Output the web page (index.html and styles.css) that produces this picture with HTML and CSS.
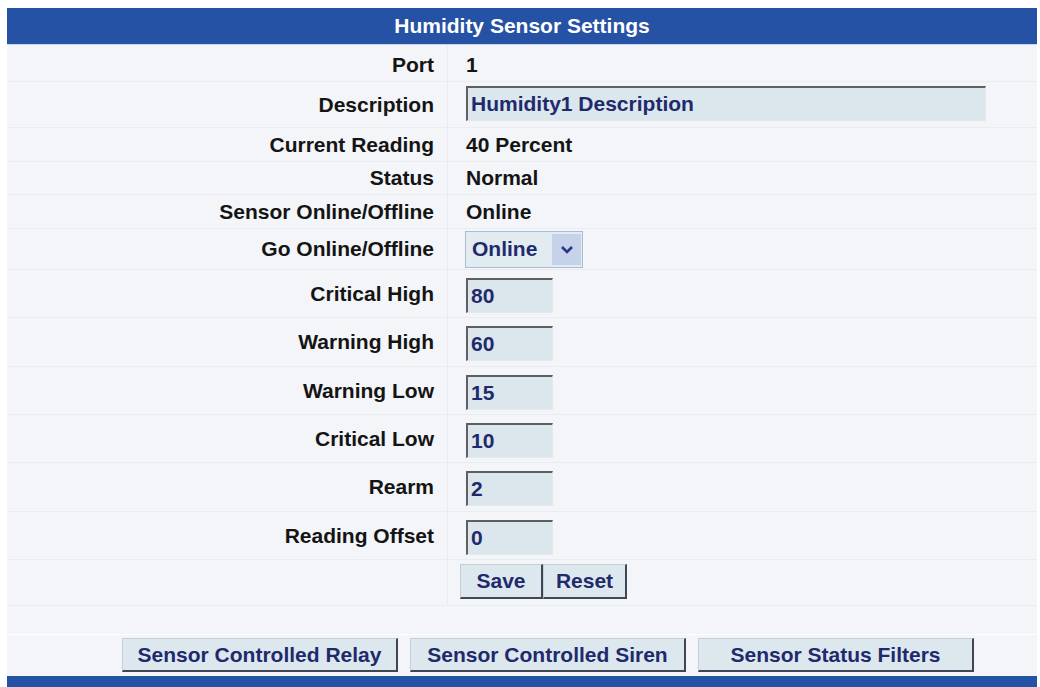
FILE: index.html
```html
<!DOCTYPE html>
<html lang="en">
<head>
<meta charset="utf-8">
<title>Humidity Sensor Settings</title>
<link rel="stylesheet" href="styles.css">
</head>
<body>
<div class="panel">
  <div class="title">Humidity Sensor Settings</div>

  <div class="row h37"><div class="label">Port</div><div class="value">1</div></div>
  <div class="row h46 desc"><div class="label">Description</div><div class="value"><input class="field wide" type="text" value="Humidity1 Description"></div></div>
  <div class="row h34"><div class="label">Current Reading</div><div class="value">40 Percent</div></div>
  <div class="row h33"><div class="label">Status</div><div class="value">Normal</div></div>
  <div class="row h34"><div class="label">Sensor Online/Offline</div><div class="value">Online</div></div>
  <div class="row h41"><div class="label">Go Online/Offline</div>
    <div class="value">
      <div class="select">
        <span class="sel-text">Online</span>
        <span class="sel-arrow"><svg width="14" height="9" viewBox="0 0 14 9"><path d="M2 2 L7 7 L12 2" fill="none" stroke="#26368a" stroke-width="2.6"/></svg></span>
      </div>
    </div>
  </div>
  <div class="row h48 num"><div class="label">Critical High</div><div class="value"><input class="field" type="text" value="80"></div></div>
  <div class="row h49 num"><div class="label">Warning High</div><div class="value"><input class="field" type="text" value="60"></div></div>
  <div class="row h48 num"><div class="label">Warning Low</div><div class="value"><input class="field" type="text" value="15"></div></div>
  <div class="row h48 num"><div class="label">Critical Low</div><div class="value"><input class="field" type="text" value="10"></div></div>
  <div class="row h49 num"><div class="label">Rearm</div><div class="value"><input class="field" type="text" value="2"></div></div>
  <div class="row h48 num"><div class="label">Reading Offset</div><div class="value"><input class="field" type="text" value="0"></div></div>
  <div class="row h46 save"><div class="label"></div><div class="value"><button class="btn small">Save</button><button class="btn small reset">Reset</button></div></div>

  <div class="spacer"></div>

  <div class="actions">
    <button class="btn big">Sensor Controlled Relay</button>
    <button class="btn big">Sensor Controlled Siren</button>
    <button class="btn big">Sensor Status Filters</button>
  </div>

  <div class="footer"></div>
</div>
</body>
</html>
```

FILE: styles.css
```css
html, body {
  margin: 0;
  padding: 0;
  background: #ffffff;
  overflow: hidden;
  height: 687px;
}

.panel {
  margin: 8px 0 0 7px;
  width: 1030px;
  background: #f3f5f8;
  font-family: "Liberation Sans", Arial, sans-serif;
  font-weight: bold;
  font-size: 21px;
  color: #141414;
}

.title {
  height: 37px;
  background: #2552a5;
  color: #ffffff;
  display: flex;
  align-items: center;
  justify-content: center;
  border-bottom: 1px solid #c9d6ea;
  box-sizing: border-box;
}

.row {
  display: grid;
  grid-template-columns: 441px 1fr;
  border-bottom: 1px solid #e9ecf0;
  box-sizing: border-box;
}

.h33 { height: 33px; }
.h34 { height: 34px; }
.h37 { height: 37px; }
.h41 { height: 41px; }
.h46 { height: 46px; }
.h48 { height: 48px; }
.h49 { height: 49px; }

.label {
  display: flex;
  align-items: center;
  justify-content: flex-end;
  padding-right: 13px;
  border-right: 1px solid #e9ecf0;
  box-sizing: border-box;
  white-space: nowrap;
}

.value {
  display: flex;
  align-items: center;
  padding-left: 18px;
  white-space: nowrap;
}

.h37 .label, .h37 .value { padding-top: 3px; }

.desc .value { padding-bottom: 3px; }
.num .value { padding-top: 3px; }

.field {
  box-sizing: border-box;
  width: 87px;
  height: 35px;
  margin: 0;
  padding: 0 3px;
  background: #dbe7ec;
  border-top: 2px solid #5d5f60;
  border-left: 2px solid #5d5f60;
  border-right: 1px solid #e3eaed;
  border-bottom: 1px solid #e3eaed;
  font-family: "Liberation Sans", Arial, sans-serif;
  font-weight: bold;
  font-size: 21px;
  color: #1f2a6c;
  outline: none;
}

.field.wide {
  width: 520px;
}

.select {
  box-sizing: border-box;
  width: 118px;
  height: 37px;
  margin-left: -1px;
  border: 1px solid #a8bdd6;
  background: #e2ecf0;
  display: flex;
  align-items: stretch;
}

.sel-text {
  flex: 1;
  display: flex;
  align-items: center;
  padding-left: 6px;
  color: #1f2a6c;
}

.sel-arrow {
  width: 29px;
  margin: 2px 1px 2px 0;
  background: #c6d2ea;
  display: flex;
  align-items: center;
  justify-content: center;
}

.save .value {
  align-items: flex-start;
  padding-top: 4px;
  padding-left: 12px;
}

.btn {
  box-sizing: border-box;
  margin: 0;
  padding: 0;
  background: #dde8ee;
  border-top: 1px solid #c4ced6;
  border-left: 1px solid #c4ced6;
  border-right: 2px solid #3f4757;
  border-bottom: 2px solid #3f4757;
  font-family: "Liberation Sans", Arial, sans-serif;
  font-weight: bold;
  font-size: 21px;
  color: #1f2a6c;
  cursor: pointer;
}

.btn.small {
  width: 83px;
  height: 35px;
}

.btn.small.reset {
  width: 84px;
}

.spacer {
  height: 29px;
  border-bottom: 1px solid #ffffff;
  box-sizing: border-box;
}

.actions {
  height: 41px;
  display: flex;
  align-items: flex-start;
  gap: 12px;
  padding: 3px 0 0 115px;
  box-sizing: border-box;
}

.btn.big {
  width: 276px;
  height: 34px;
}

.footer {
  height: 14px;
  background: #2552a5;
}
```
